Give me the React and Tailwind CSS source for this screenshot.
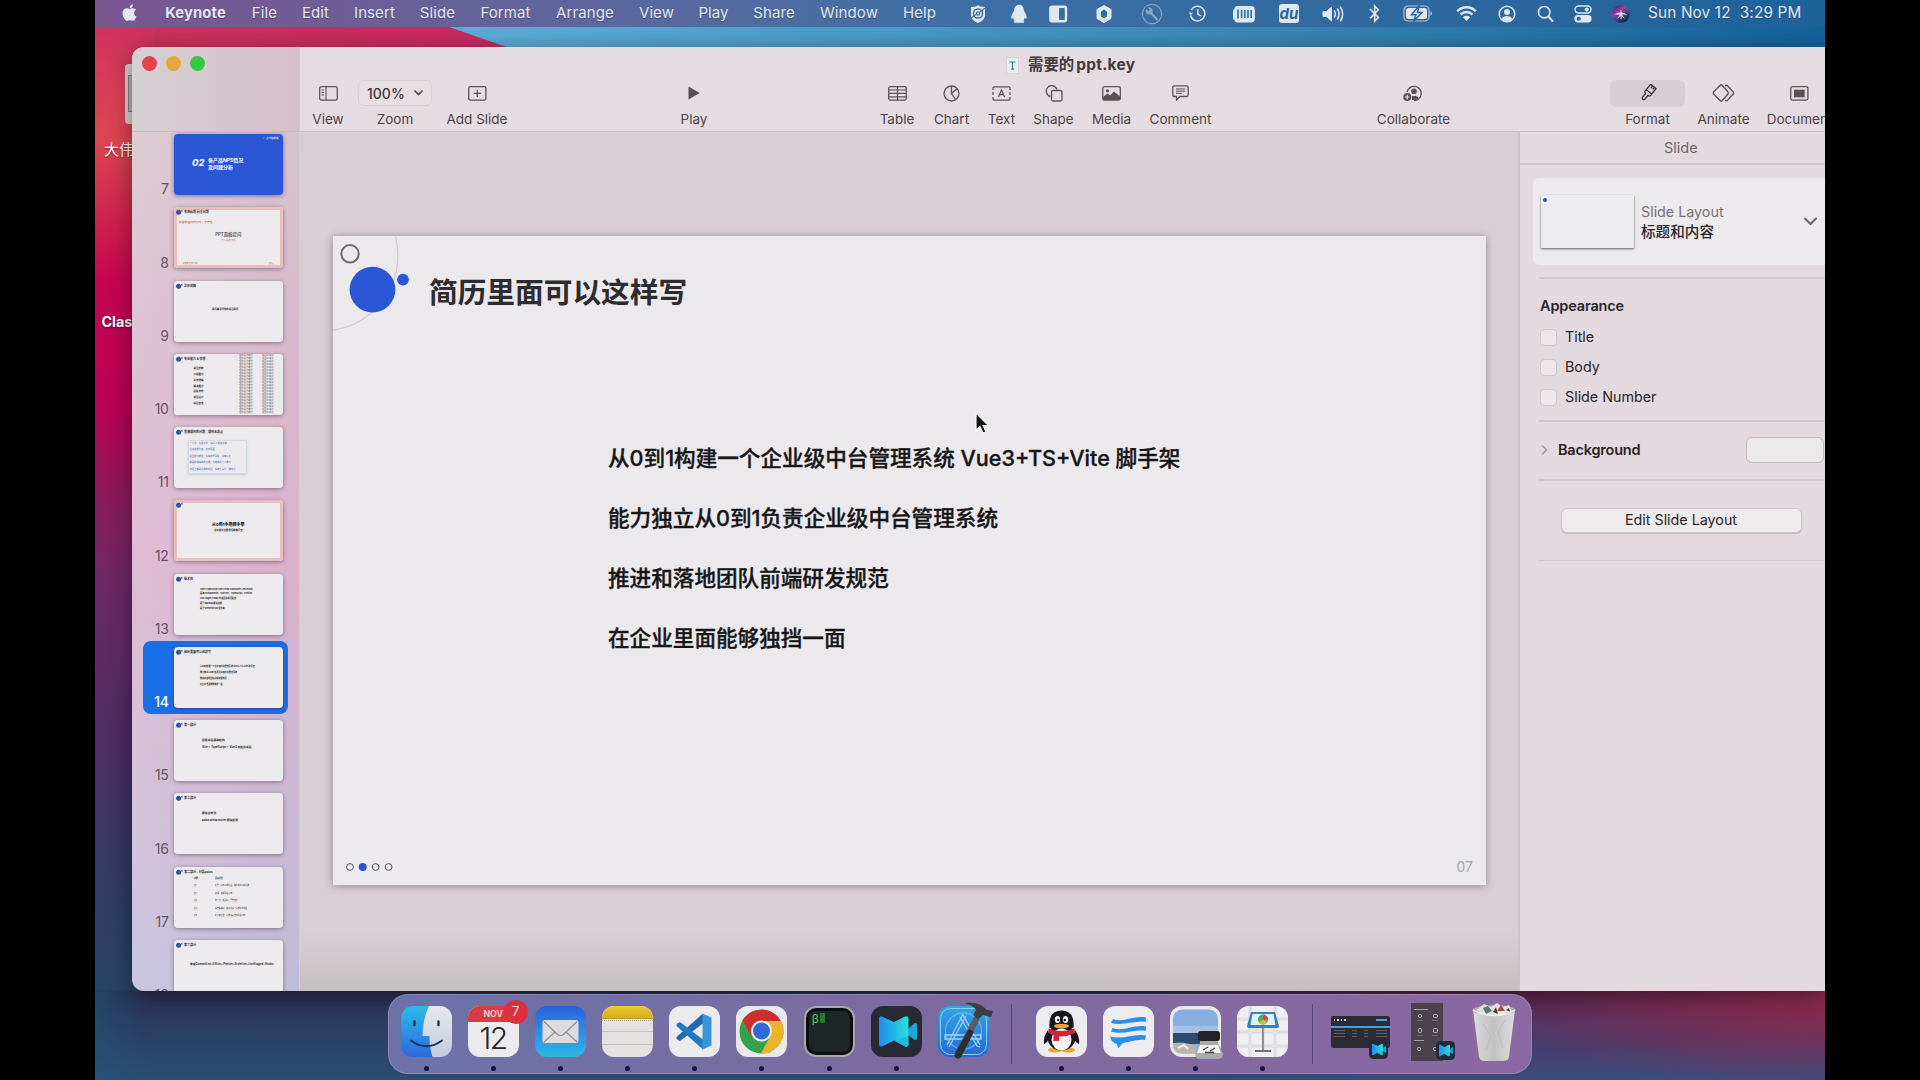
import React from "react";
import { FaApple, FaBluetoothB } from "react-icons/fa";

const UI = "font-['Inter','Noto_Sans_CJK_SC',sans-serif]";

/* ---------- wallpaper ---------- */
function Wallpaper() {
  return (
    <svg className="absolute inset-0 h-full w-full" viewBox="0 0 1730 1080" preserveAspectRatio="none">
      <defs>
        <linearGradient id="wl" x1="0" y1="0" x2="0" y2="1">
          <stop offset="0" stopColor="#cb2c62" />
          <stop offset="0.07" stopColor="#d63c58" />
          <stop offset="0.13" stopColor="#dc4650" />
          <stop offset="0.19" stopColor="#d0294e" />
          <stop offset="0.26" stopColor="#c60550" />
          <stop offset="0.38" stopColor="#b80254" />
          <stop offset="0.46" stopColor="#8a1a5c" />
          <stop offset="0.54" stopColor="#6c2864" />
          <stop offset="0.68" stopColor="#4e2c62" />
          <stop offset="0.8" stopColor="#343a62" />
          <stop offset="0.92" stopColor="#254465" />
          <stop offset="1" stopColor="#28527a" />
        </linearGradient>
        <linearGradient id="wt" x1="0" y1="0" x2="1" y2="0">
          <stop offset="0" stopColor="#c8305f" />
          <stop offset="1" stopColor="#c91a68" />
        </linearGradient>
        <linearGradient id="wb" x1="0" y1="0" x2="1" y2="0">
          <stop offset="0" stopColor="#5eaedb" />
          <stop offset="0.25" stopColor="#4f9fce" />
          <stop offset="0.6" stopColor="#3b87b6" />
          <stop offset="1" stopColor="#14629a" />
        </linearGradient>
        <linearGradient id="wbot" x1="0" y1="0" x2="0" y2="1">
          <stop offset="0" stopColor="#2d3054" />
          <stop offset="0.5" stopColor="#2a4064" />
          <stop offset="1" stopColor="#2a4e74" />
        </linearGradient>
        <linearGradient id="wbm" x1="0" y1="0" x2="1" y2="0">
          <stop offset="0" stopColor="#fff" stopOpacity="0" />
          <stop offset="0.03" stopColor="#fff" />
        </linearGradient>
        <linearGradient id="wbr" x1="0" y1="0" x2="0" y2="1">
          <stop offset="0" stopColor="#5a2048" />
          <stop offset="0.4" stopColor="#513463" />
          <stop offset="1" stopColor="#3a4c7c" />
        </linearGradient>
        <radialGradient id="wrr" cx="1" cy="0.1" r="1">
          <stop offset="0" stopColor="#8e2a4c" />
          <stop offset="1" stopColor="#8e2a4c" stopOpacity="0" />
        </radialGradient>
        <linearGradient id="fade" x1="0" y1="0" x2="1" y2="0">
          <stop offset="0" stopColor="#fff" stopOpacity="0" />
          <stop offset="0.400" stopColor="#fff" />
        </linearGradient>
        <mask id="m">
          <rect x="1000" y="980" width="730" height="100" fill="url(#fade)" />
        </mask>
        <mask id="m2">
          <rect x="0" y="980" width="1730" height="100" fill="url(#wbm)" />
        </mask>
      </defs>
      <rect width="1730" height="1080" fill="url(#wl)" />
      <rect x="0" y="990" width="1730" height="90" fill="url(#wbot)" mask="url(#m2)" />
      <rect x="1000" y="985" width="730" height="95" fill="url(#wbr)" mask="url(#m)" />
      <rect x="1400" y="985" width="330" height="95" fill="url(#wrr)" />
      <rect x="60" y="27" width="500" height="24" fill="url(#wt)" opacity="0.6" />
      <path d="M340 22 L420 50 H1730 V22 Z" fill="url(#wb)" />
    </svg>
  );
}

/* ---------- menu bar ---------- */
const menus = [
  ["File", "w-[25px]"],
  ["Edit", "w-[27px]"],
  ["Insert", "w-[41px]"],
  ["Slide", "w-[35px]"],
  ["Format", "w-[51px]"],
  ["Arrange", "w-[58px]"],
  ["View", "w-[35px]"],
  ["Play", "w-[29px]"],
  ["Share", "w-[42px]"],
  ["Window", "w-[58px]"],
  ["Help", "w-[33px]"],
];

function Cell({ className, children }) {
  return (
    <div className={"flex w-5 shrink-0 items-center justify-center overflow-visible " + className}>
      {children}
    </div>
  );
}

function S({ w = 20, h = 20, vb, children, ...p }) {
  return (
    <svg width={w} height={h} viewBox={vb || `0 0 ${w} ${h}`} fill="none" className="shrink-0" {...p}>
      {children}
    </svg>
  );
}

function MenuBar() {
  const c = "#dfe8f1";
  return (
    <div className="relative flex h-[27px] shrink-0 items-center bg-linear-to-r from-[#7a5590] via-[#4070a6] via-48% to-[#1d6299] text-[15px] tracking-[0.1px] text-[#e3e6f0] [text-shadow:0_1px_1px_rgba(0,0,0,0.25)]">
      <FaApple className="ml-[24.5px] size-[19px] -translate-y-px shrink-0" />
      <div className="ml-[25.5px] flex gap-[25px] whitespace-nowrap">
        <div className="flex w-[63px] justify-center text-[14.8px] font-bold">Keynote</div>
        {menus.map(([t, w]) => (
          <div key={t} className={"flex justify-center " + w}>{t}</div>
        ))}
      </div>
      <Cell className="ml-[32px]">
        <S vb="0 0 20 20">
          <path d="M10 1 L12 2.5 L17 3 V11 C17 15 13.5 17.5 10 19 C6.500 17.500 3 15 3 11 V3 L8 2.500 Z" fill={c} />
          <circle cx="10" cy="9.500" r="4.600" stroke="#3b6f9f" strokeWidth="1.500" />
          <circle cx="10" cy="9.500" r="1.600" stroke="#3b6f9f" strokeWidth="1.200" />
          <path d="M3 14 L8 10.500 M12 8 L17 4" stroke="#3b6f9f" strokeWidth="1.100" />
        </S>
      </Cell>
      <Cell className="ml-[21px]">
        <S>
          <path d="M10 0.800 C13.300 0.800 15 3.500 15 7 C16.800 9.500 17.900 12 17.600 14.200 C17.300 15.300 16.400 14.400 15.800 13.700 C15.600 15 15 16 14.400 16.700 C15.400 17.300 15.600 18.800 14.400 18.800 H5.600 C4.400 18.800 4.600 17.300 5.600 16.700 C5 16 4.400 15 4.200 13.700 C3.600 14.400 2.700 15.300 2.400 14.200 C2.100 12 3.200 9.500 5 7 C5 3.500 6.700 0.800 10 0.800 Z" fill={c} />
        </S>
      </Cell>
      <Cell className="ml-[19px]">
        <S>
          <rect x="1.200" y="1.500" width="18" height="17" rx="3" fill={c} />
          <rect x="11" y="4" width="5.800" height="12" rx="0.800" fill="#336f9f" />
        </S>
      </Cell>
      <Cell className="ml-[26px]">
        <S>
          <path d="M10 1.500 L17 5.500 V14.500 L10 18.500 L3 14.500 V5.500 Z" fill={c} stroke={c} strokeLinejoin="round" />
          <path d="M10 5.500 L13 7.500 V12.500 L10 14.500 L7 12.500 V7.500 Z" fill="#336f9f" />
        </S>
      </Cell>
      <Cell className="ml-[28px]">
        <S w={22} h={22} opacity="0.45">
          <circle cx="11" cy="11" r="9.700" stroke={c} strokeWidth="1.200" />
          <path d="M10 10 L16 16.500" stroke={c} strokeWidth="2.200" strokeLinecap="round" />
          <circle cx="8.300" cy="8" r="3.500" fill={c} />
          <path d="M5 4 L8 7.500" stroke="#336f9f" strokeWidth="2" />
        </S>
      </Cell>
      <Cell className="ml-[25px]">
        <S w={19} h={19}>
          <path d="M3.200 6 A7.300 7.300 0 1 1 2.500 11.500" stroke={c} strokeWidth="1.500" />
          <path d="M0.500 8.500 L2.600 11.200 L5 8.700 Z" fill={c} />
          <path d="M9.800 5.200 V10 L13 12" stroke={c} strokeWidth="1.400" />
        </S>
      </Cell>
      <Cell className="ml-[27px]">
        <S w={22} h={18}>
          <rect x="0" y="4" width="22" height="11" rx="2" fill={c} />
          <rect x="1.500" y="1" width="20" height="16.500" rx="3" fill={c} />
          <path d="M5 4.500 V13.500 M8.600 5 V13 M11.800 5 V13 M15 5 V13 M18.200 5 V13" stroke="#2c6ca0" strokeWidth="1.600" />
        </S>
      </Cell>
      <Cell className="ml-[25px]">
        <div className="flex h-[19px] w-5 shrink-0 items-center justify-center rounded-[3px] bg-[#dfe8f1] text-[15px] leading-none font-bold text-[#2a669a] italic [text-shadow:none]">
          du
        </div>
      </Cell>
      <Cell className="ml-6">
        <S w={23} h={18}>
          <path d="M1 6.500 H4.500 L9.500 2 V16 L4.500 11.500 H1 Z" fill={c} stroke={c} strokeLinejoin="round" />
          <path d="M12.500 6 Q14.300 9 12.500 12 M15.500 4 Q18.500 9 15.500 14 M18.500 2 Q22.800 9 18.500 16" stroke={c} strokeWidth="1.500" strokeLinecap="round" />
        </S>
      </Cell>
      <Cell className="ml-[21px]"><FaBluetoothB className="size-[19px] shrink-0" /></Cell>
      <Cell className="ml-6">
        <S w={30} h={17}>
          <rect x="1" y="1" width="25" height="15" rx="4" stroke={c} strokeWidth="1.200" opacity="0.7" />
          <rect x="3" y="3" width="21" height="11" rx="2.500" fill={c} />
          <path d="M27.600 6 Q30 8.500 27.600 11 Z" fill={c} />
          <path d="M16.500 0.500 L8.500 9.700 H13 L10.500 16.500 L19 7.400 H14.400 Z" fill={c} stroke="#2868a0" strokeWidth="1.500" />
        </S>
      </Cell>
      <Cell className="ml-7">
        <S w={21} h={17}>
          <path d="M1.200 6.300 C6.500 0.900 14.500 0.900 19.800 6.300 M4.500 9.600 C8 6.100 13 6.100 16.500 9.600" stroke={c} strokeWidth="2.300" />
          <path d="M7 12.200 C9 10.300 12 10.300 14 12.200 L10.500 16 Z" fill={c} />
        </S>
      </Cell>
      <Cell className="ml-[20.5px]">
        <S w={18} h={18}>
          <circle cx="9" cy="9" r="7.800" stroke={c} strokeWidth="1.500" />
          <circle cx="9" cy="7" r="3" fill={c} />
          <path d="M3.800 14 C4.500 10 13.500 10 14.200 14 C11.500 17 6.500 17 3.800 14 Z" fill={c} />
        </S>
      </Cell>
      <Cell className="ml-[18.5px]">
        <S w={17} h={18}>
          <circle cx="7.200" cy="7.200" r="5.700" stroke={c} strokeWidth="1.600" />
          <path d="M11.300 11.500 L15.500 16" stroke={c} strokeWidth="1.900" strokeLinecap="round" />
        </S>
      </Cell>
      <Cell className="ml-[18px]">
        <S w={18} h={18}>
          <rect x="1" y="1" width="16" height="7" rx="3.500" stroke={c} strokeWidth="1.400" />
          <circle cx="12.800" cy="4.500" r="2" fill={c} />
          <rect x="0.400" y="10" width="17.200" height="7.500" rx="3.700" fill={c} />
          <circle cx="4.700" cy="13.750" r="2.100" fill="#2666a0" />
        </S>
      </Cell>
      <Cell className="ml-[18px]">
        <S w={18} h={18}>
          <defs>
            <linearGradient id="siri" x1="0" y1="0" x2="0.700" y2="1"><stop offset="0" stopColor="#2a1e4c" /><stop offset="0.400" stopColor="#a03c9c" /><stop offset="0.650" stopColor="#3f4a86" /><stop offset="1" stopColor="#16203c" /></linearGradient>
          </defs>
          <circle cx="9" cy="9" r="8.800" fill="url(#siri)" />
          <path d="M2.500 9.500 Q9 5.500 15.500 10 Q11 9 9.800 9.500 L13 14 L9 10.500 L5 14 L8 9.500 Z" fill="#e8eefa" />
          <path d="M9 5 V14" stroke="#c7d9f2" strokeWidth="1" />
        </S>
      </Cell>
      <div className="ml-[17px] text-[15.3px] tracking-[0.17px] whitespace-pre">Sun Nov 12  3:29 PM</div>
    </div>
  );
}

/* ---------- toolbar ---------- */
function Tool({ label, className, children }) {
  return (
    <div className={"flex shrink-0 flex-col items-center " + className}>
      <div className="flex h-7 w-full items-center justify-center text-[#5c5055]">{children}</div>
      <div className="text-[13.5px] leading-6 whitespace-nowrap text-[#4b4347]">{label}</div>
    </div>
  );
}

function Toolbar() {
  const k = { stroke: "currentColor", strokeWidth: 1.3 };
  return (
    <div className="flex h-[85px] shrink-0 flex-col border-b-[1.5px] border-[#c9c0c5] bg-[#e4dce0] pt-[3px]">
      <div className="flex h-8 items-center pl-[706px]">
        <S w={13} h={17}>
          <rect x="0.500" y="0.500" width="12" height="16" fill="#e9ecf1" stroke="#d0d3da" />
          <path d="M3.500 5 H9.500 M6.500 5 V12 M5 12.200 H8" stroke="#4178a8" strokeWidth="1.200" />
        </S>
        <div className="ml-[9px] text-[15.4px] font-bold text-[#403a3e]">
          需要的<span className="ml-[2px] tracking-[0.3px]">ppt.key</span>
        </div>
      </div>
      <div className="-mt-[2.5px] flex items-start pt-[1.5px]">
        <Tool label="View" className="w-14">
          <S w={19} h={15}>
            <rect x="0.700" y="0.700" width="17.600" height="13.400" rx="1.700" {...k} />
            <path d="M7 1 V14 M2.600 4 H5 M2.600 6.500 H5 M2.600 9 H5" stroke="currentColor" strokeWidth="1.100" />
          </S>
        </Tool>
        <Tool label="Zoom" className="ml-[2px] w-[74px]">
          <div className="flex h-[26px] w-full items-center justify-center gap-[9px] rounded-md border border-[#d8cfd4] bg-[#e6dfe2] text-[14px] font-medium text-[#3f373b]">
            <span className="w-[38px]">100%</span>
            <S w={9} h={6}><path d="M1 1 L4.500 4.500 L8 1" stroke="#51484c" strokeWidth="1.700" strokeLinecap="round" /></S>
          </div>
        </Tool>
        <Tool label="Add Slide" className="ml-[13px] w-16">
          <S w={19} h={15}>
            <rect x="0.700" y="0.700" width="17.200" height="13.400" rx="1.500" {...k} />
            <path d="M9.300 3.800 V11 M5.700 7.400 H12.900" {...k} />
          </S>
        </Tool>
        <Tool label="Play" className="ml-[165px] w-10">
          <S w={12} h={14}><path d="M0.500 0.500 L11.700 7 L0.500 13.500 Z" fill="#5b4f54" /></S>
        </Tool>
        <Tool label="Table" className="ml-[161px] w-11">
          <S w={19} h={15}>
            <rect x="0.700" y="0.700" width="17.600" height="13.400" rx="1.500" {...k} />
            <path d="M1 4 H18 M1 7.400 H18 M1 10.800 H18 M9.500 1 V14" stroke="currentColor" strokeWidth="1.200" />
          </S>
        </Tool>
        <Tool label="Chart" className="ml-[10.5px] w-11">
          <S w={17} h={17}>
            <circle cx="8.500" cy="8.500" r="7.500" {...k} />
            <path d="M8.500 1 V8.500 L14 3.800 M8.500 8.500 L12.500 14.500" {...k} />
          </S>
        </Tool>
        <Tool label="Text" className="ml-2 w-10">
          <S w={19} h={15}>
            <path d="M1 4 V2.200 Q1 0.900 2.300 0.900 H16.700 Q18 0.900 18 2.200 V4 M18 6 V9 M1 6 V9 M1 11 V12.800 Q1 14.100 2.300 14.100 H16.700 Q18 14.100 18 12.800 V11" {...k} />
            <path d="M6.500 11 L9.500 4 L12.500 11 M7.600 8.700 H11.400" stroke="currentColor" strokeWidth="1.200" />
          </S>
        </Tool>
        <Tool label="Shape" className="ml-2.5 w-11">
          <S w={18} h={17}>
            <path d="M5.500 11.500 A5.500 5.500 0 1 1 12 4.500" {...k} />
            <rect x="6.500" y="5.500" width="10.500" height="10.500" rx="1.500" {...k} />
          </S>
        </Tool>
        <Tool label="Media" className="ml-3.5 w-11">
          <S w={19} h={15}>
            <rect x="0.700" y="0.700" width="17.600" height="13.400" rx="1.500" {...k} />
            <path d="M1 11 L5.500 7.500 L8 9.500 L12 5.500 L18 10.500 V14 H1 Z" fill="currentColor" />
            <circle cx="5.500" cy="4.800" r="1.600" fill="currentColor" />
          </S>
        </Tool>
        <Tool label="Comment" className="ml-[15px] w-16">
          <S w={17} h={16} vb="0 0 17 16">
            <path d="M2.500 0.800 H14.500 Q16.200 0.800 16.200 2.500 V9.800 Q16.200 11.500 14.500 11.500 H8 L4.500 15 V11.500 H2.500 Q0.800 11.500 0.800 9.800 V2.500 Q0.800 0.800 2.500 0.800 Z" stroke="currentColor" strokeWidth="1.300" />
            <path d="M4 4 H13 M4 6.200 H13 M4 8.400 H10" stroke="currentColor" strokeWidth="1" />
          </S>
        </Tool>
        <Tool label="Collaborate" className="ml-[161px] w-20">
          <S w={19} h={17} transform="translate(-1 0)">
            <path d="M4 7 A7.200 7.200 0 1 1 11 15.700" {...k} />
            <circle cx="11" cy="6.200" r="2.800" fill="currentColor" />
            <path d="M9 15 V11 H13 Q15.500 11.500 15.500 13.500 L13 15 Z" fill="currentColor" />
            <circle cx="4.300" cy="12" r="4" fill="currentColor" />
            <path d="M4.300 9.800 V14.200 M2.100 12 H6.500" stroke="#e4dce0" strokeWidth="1.200" />
          </S>
        </Tool>
        <Tool label="Format" className="ml-[156.5px] w-[75px]">
          <div className="flex h-[27px] w-full items-center justify-center rounded-md bg-[#d6ced2]">
            <S w={18} h={18}>
              <g transform="rotate(40 9 9)">
                <path d="M5.500 0.500 H12.500 V7.500 H5.500 Z M5.500 7.500 V9.500 Q5.500 10.500 7.500 11 V16 Q9 18.500 10.500 16 V11 Q12.500 10.500 12.500 9.500 V7.500 M8 0.500 V3.500 M10.300 0.500 V3" stroke="#2e2629" strokeWidth="1.200" strokeLinejoin="round" />
              </g>
            </S>
          </div>
        </Tool>
        <Tool label="Animate" className="ml-[10.5px] w-14">
          <S w={23} h={18}>
            <path d="M8.500 1 Q9.200 0.500 9.900 1 L16 8 Q16.600 9 16 10 L9.900 17 Q9.200 17.500 8.500 17 L1.500 10 Q0.800 9 1.500 8 Z" stroke="currentColor" strokeWidth="1.300" />
            <path d="M13 1.500 L15 1.200 L21.500 8.200 Q22 9 21.500 9.800 L15 16.800 L13 16.500" stroke="currentColor" strokeWidth="1.300" />
          </S>
        </Tool>
        <Tool label="Document" className="ml-[15px] w-[66px]">
          <S w={19} h={15}>
            <rect x="0.700" y="0.700" width="17.200" height="13.400" rx="1.500" {...k} />
            <rect x="4" y="3.700" width="10.700" height="7.600" fill="currentColor" />
          </S>
        </Tool>
      </div>
    </div>
  );
}

/* ---------- slide navigator ---------- */
function Mark() {
  return (
    <S w={7} h={6}>
      <circle cx="2.600" cy="3.200" r="2.500" fill="#3153a8" />
      <circle cx="5.900" cy="1.900" r="0.800" fill="#3153a8" />
    </S>
  );
}

function Mini({ title, framed, children, lines, body = "" }) {
  return (
    <div className={"flex h-full w-full flex-col bg-[#eceaec] text-[2.8px] leading-[3.4px] text-[#222] " + (framed ? "border-[3px] border-[#e7bebd] " : "")}>
      <div className={"flex items-center gap-[1.5px] text-[3px] leading-[6px] font-bold whitespace-nowrap " + (framed ? "-mt-[1.500px] -ml-[1.500px]" : "mt-[2px] ml-[1.500px]")}>
        <Mark />
        <span>{title}</span>
      </div>
      {lines && (
        <div className={"flex flex-col font-bold whitespace-nowrap " + body}>
          {lines.map((l) => <div key={l}>{l}</div>)}
        </div>
      )}
      {children}
    </div>
  );
}

const slideLines = [
  "从0到1构建一个企业级中台管理系统 Vue3+TS+Vite 脚手架",
  "能力独立从0到1负责企业级中台管理系统",
  "推进和落地团队前端研发规范",
  "在企业里面能够独挡一面",
];

const dense = Array.from({ length: 20 }, (_, i) => i);

const thumbs = [
  [7, (
    <div className="flex h-full w-full flex-col bg-[#2b56d6] text-white">
      <div className="mt-[3px] mr-1 self-end text-[2.500px] leading-[4px]">◎ 大伟聊前端</div>
      <div className="mt-[16px] ml-[18px] flex gap-[3.500px]">
        <span className="text-[9.500px] leading-[11px] font-bold italic">02</span>
        <span className="text-[5px] leading-[6.500px] font-bold">各产品NPS情况<br />及问题分析</span>
      </div>
    </div>
  )],
  [8, (
    <Mini title="专场标题 前言问题" framed>
      <div className="mt-[6px] ml-0.5 text-[#d04a3c]">前言前言如何打动：才开始</div>
      <div className="mt-[8px] text-center text-[4.400px] leading-[5px] font-medium text-[#444]">PPT面临提问</div>
      <div className="mt-0.5 text-center text-[2.400px] text-[#d04a3c]">个人亮点介绍</div>
      <div className="mt-auto flex justify-between px-1.5 text-[1.800px] text-[#d04a3c]"><span>前言前言如何打动</span><span>第8页</span></div>
    </Mini>
  )],
  [9, <Mini title="总体讲解" lines={["简历编写好你的项目简历"]} body="mt-[19px] pl-[38px] text-[2.400px]" />],
  [10, (
    <div className="flex h-full w-full bg-[#eceaec]">
      <div className="w-[65px]">
        <Mini title="专业能力 & 荣誉" lines={["项目架构", "工程能力", "业务理解", "解决能力", "团队协作", "项目设计", "项目复盘"]} body="mt-[5.500px] ml-[19.500px] gap-[2.400px] text-[2.500px]" />
      </div>
      {[0, 1].map((c) => (
        <div key={c} className={"text-[2.300px] leading-[3px] whitespace-nowrap text-[#555] " + (c ? "ml-[9px] w-[12px]" : "w-[14px]")}>
          {dense.map((i) => <div key={i}>{c ? "项目工程化" : "组件设计能力"}</div>)}
        </div>
      ))}
    </div>
  )],
  [11, (
    <Mini title="普通项目的问题：项目无亮点">
      <div className="mt-[5px] ml-[13.500px] flex h-[34px] w-[59px] flex-col gap-[3px] rounded-[1px] border-[0.5px] border-[#d4dae2] pt-px pl-px text-[2.300px] whitespace-nowrap text-[#3d6db5] shadow-sm">
        <div>一个月：负责系统，编写 X 模块功能</div>
        <div>业务增删改查，完成页面</div>
        <div>项目的功能性，没有技术深度，没有亮点</div>
        <div>都是前端基础的功能，不能体现个人能力</div>
        <div>简历上都是这样的项目，没有竞争力，概率大</div>
      </div>
    </Mini>
  )],
  [12, (
    <Mini title="" framed>
      <div className="mt-[14px] text-center text-[4px] leading-[5px] font-bold text-black">从0到1手撸脚手架</div>
      <div className="mt-[2.500px] text-center text-[2.400px] font-bold">企业级中台管理系统脚手架</div>
    </Mini>
  )],
  [13, <Mini title="技术栈" lines={["Vue3  TypeScript  Vue3 Pinia VueRouter Less Eslint", "基础 Components、VueUse、TypeScript、Prettier、", "CSS Pages Husky 约束团队规范提交", "基于 Markup 模块搭建", "基于 ElementPlus 组件库"]} body="mt-[6px] ml-[26px] gap-[1.500px] text-[2.150px]" />],
  [14, <Mini title="简历里面可以这样写" lines={slideLines} body="mt-[10.500px] ml-[26px] gap-[2.400px] text-[2.050px]" />],
  [15, <Mini title="第一部分" lines={["配置项目基础结构", "Vite + TypeScript + Vue3 初始化项目"]} body="mt-[11px] ml-7 gap-[3.200px] text-[2.850px]" />],
  [16, <Mini title="第二部分" lines={["模块化封装", "axios pinia router 模块配置"]} body="mt-[11px] ml-7 gap-[3.200px] text-[2.850px]" />],
  [17, (
    <Mini title="第二部分 - 封装axios">
      <div className="mt-[2px] ml-5 flex w-[63px] flex-col gap-[4.200px] text-[1.900px] whitespace-nowrap">
        {["目标问题", "封装：添加请求拦截，携带令牌公共参数", "取消：取消重复请求", "统一化：错误码，异常信息", "基于类实现：实例化多个请求对象适配", "提升健壮性：请求失败自动重试机制"].map((t, i) => (
          <div key={t} className={"flex " + (i ? "" : "font-bold")}><span className="w-[21px]">{i ? "第" + i : "功能"}</span><span>{t}</span></div>
        ))}
      </div>
    </Mini>
  )],
  [18, <Mini title="第三部分" lines={["集成CommitLint+ESLint+Prettier+StyleLint+LintStaged+Husky"]} body="mt-[15.500px] ml-4 text-[2.750px]" />],
];

function Navigator() {
  return (
    <div className="flex w-[168px] shrink-0 flex-col border-r border-[#d5cbd2] bg-linear-to-b from-[#d5c6ca] via-[#dab0cd] via-55% to-[#bfbdd8]">
      <div className="flex h-[85px] shrink-0 items-start gap-[9px] border-b-[1.5px] border-[#c9b9c2] bg-linear-to-r from-[#d5d0d3] to-[#d7bfca] pt-[9px] pl-[9.500px]">
        <div className="size-[15px] rounded-full bg-[#e04453]" />
        <div className="size-[15px] rounded-full bg-[#e5a939]" />
        <div className="size-[15px] rounded-full bg-[#34c840]" />
      </div>
      <div className="min-h-0 flex-1 overflow-hidden bg-linear-to-r from-white/15 to-transparent">
        <div className="-mt-[4px] flex flex-col pr-[11px] pl-[11px]">
          {thumbs.map(([n, body]) => {
            const on = n === 14;
            return (
              <div key={n} className={"flex h-[73.25px] shrink-0 rounded-lg pt-[6px] pl-px " + (on ? "bg-[#1a6fe8]" : "")}>
                <div className={"w-[24.500px] self-end pb-[2px] text-right text-[14px] tracking-tight " + (on ? "font-medium text-white" : "text-[#66535f]")}>{n}</div>
                <div className="ml-[5.500px] h-[61px] w-[108.500px] overflow-hidden rounded-[4px] shadow-[0_1px_4px_rgba(60,30,60,0.5)]">{body}</div>
              </div>
            );
          })}
        </div>
      </div>
    </div>
  );
}

/* ---------- slide canvas ---------- */
function Slide() {
  return (
    <div className="relative flex h-[649px] w-[1153px] flex-col bg-[#ebe9eb] shadow-[0_1px_8px_rgba(60,50,55,0.45)]">
      <svg className="absolute top-0 left-0" width="90" height="100" viewBox="0 0 90 100" fill="none">
        <circle cx="-10.400" cy="19.500" r="75.200" stroke="#cbc9cb" strokeWidth="1.200" />
        <circle cx="17" cy="17.800" r="8.700" stroke="#6c6a6c" strokeWidth="2" fill="#ebe9eb" />
        <circle cx="39.500" cy="53.600" r="22.900" fill="#2b56d6" />
        <circle cx="70" cy="43.600" r="5.900" fill="#2b56d6" />
      </svg>
      <div className="mt-[37px] ml-[96px] text-[28.700px] leading-10 font-bold text-[#2d2c2e]">简历里面可以这样写</div>
      <div className="mt-[114.500px] ml-[275px] flex flex-col text-[21.600px] leading-[60.200px] font-medium whitespace-nowrap text-[#161517] [-webkit-text-stroke:0.35px_#161517]">
        {slideLines.map((l) => <div key={l}>{l}</div>)}
      </div>
      <div className="mt-auto mb-[9px] flex items-center justify-between pr-[13px] pl-[13px]">
        <svg width="48" height="10" viewBox="0 0 48 10" fill="none">
          <circle cx="4" cy="5" r="3.400" stroke="#555" />
          <circle cx="16.700" cy="5" r="4" fill="#2b56d6" />
          <circle cx="29.600" cy="5" r="3.400" stroke="#555" />
          <circle cx="42.600" cy="5" r="3.400" stroke="#555" />
        </svg>
        <span className="text-[14px] leading-[18px] text-[#a9a6a9]">07</span>
      </div>
      <svg className="absolute top-[175px] left-[641px]" width="18" height="26" viewBox="0 0 18 26">
        <path d="M2 2 V19 L6 15.500 L9 22 L12 20.700 L9.200 14.500 H14.500 Z" fill="#111" stroke="#f6f6f6" strokeWidth="1.200" />
      </svg>
    </div>
  );
}

/* ---------- inspector ---------- */
function Rule() {
  return <div className="ml-[18.500px] h-[1.500px] shrink-0 bg-[#cfc5ca]" />;
}

function Inspector() {
  return (
    <div className="flex w-[307px] shrink-0 flex-col border-l-2 border-[#cbc2c7] bg-[#e2dade] text-[14.500px] text-[#2a2528]">
      <div className="flex h-[33px] shrink-0 items-center border-b-2 border-[#cfc6cb] pt-px pl-[144px] text-[#706669]">Slide</div>
      <div className="mt-[13px] ml-[13px] flex h-[87px] shrink-0 items-center rounded-l-md bg-[#eceaec] pl-[7.500px]">
        <div className="-mt-px h-[53px] w-[93px] bg-[#ecebed] pt-[3px] pl-[2px] shadow-[0_1px_2px_rgba(0,0,0,0.6)]">
          <div className="size-[4px] rounded-full bg-[#3153b8]" />
        </div>
        <div className="ml-[7.500px] flex flex-col leading-[21px]">
          <span className="text-[14.300px] text-[#777175]">Slide Layout</span>
          <span className="text-[14.600px] font-medium">标题和内容</span>
        </div>
        <div className="mr-[8.500px] ml-auto">
          <S w={13} h={9}><path d="M1 1.500 L6.500 7 L12 1.500" stroke="#6a6367" strokeWidth="2" strokeLinecap="round" /></S>
        </div>
      </div>
      <div className="mt-[12px]"><Rule /></div>
      <div className="mt-[15px] ml-5 leading-6 font-semibold tracking-[-0.150px]">Appearance</div>
      <div className="mt-[4.500px] ml-5 flex flex-col text-[14.300px]">
        {["Title", "Body", "Slide Number"].map((t) => (
          <div key={t} className="flex h-[30px] items-center">
            <div className="size-[17px] rounded-[4px] border border-[#cfc7cb] bg-[#ece8ea]" />
            <span className="ml-2">{t}</span>
          </div>
        ))}
      </div>
      <div className="mt-[8px]"><Rule /></div>
      <div className="flex h-[57.500px] shrink-0 items-center pl-[21px]">
        <S w={7} h={10}><path d="M1.500 1 L5.500 5 L1.500 9" stroke="#a0979b" strokeWidth="1.500" strokeLinecap="round" /></S>
        <span className="ml-[10px] font-semibold tracking-[-0.200px]">Background</span>
        <div className="mr-px ml-auto h-[26px] w-[78px] rounded-md border border-[#bfb7bb] bg-[#ece9eb]" />
      </div>
      <Rule />
      <div className="mt-[27px] ml-[40.500px] flex h-[25px] w-[241px] shrink-0 items-center justify-center rounded-md border border-[#ccc4c8] bg-[#eeebed] text-[14.300px] shadow-[0_1px_1px_rgba(0,0,0,0.15)]">Edit Slide Layout</div>
      <div className="mt-[27px]"><Rule /></div>
    </div>
  );
}

function KeynoteWindow() {
  return (
    <div className="relative mt-5 ml-[37px] flex h-[944px] shrink-0 overflow-hidden rounded-l-[12px] shadow-[0_4px_22px_rgba(0,0,0,0.45)]">
      <Navigator />
      <div className="flex min-w-0 flex-1 flex-col">
        <Toolbar />
        <div className="flex min-h-0 flex-1">
          <div className="min-w-0 flex-1 bg-linear-to-b from-[#d8cfd4] from-93% to-[#c6bfc1] pt-[104px] pl-[33px]"><Slide /></div>
          <Inspector />
        </div>
      </div>
    </div>
  );
}

/* ---------- dock ---------- */
function DockApp({ dot = true, className = "", children }) {
  return (
    <div className={"flex w-[51px] shrink-0 flex-col items-center " + className}>
      <div className="relative h-[51px] w-[51px]">{children}</div>
      <div className={"mt-[9.500px] size-[5px] rounded-full " + (dot ? "bg-[#15114c]" : "")} />
    </div>
  );
}

function Camera({ className }) {
  return (
    <svg viewBox="0 0 51 51" className={className}>
      <defs>
        <linearGradient id="cam" x1="0" x2="1"><stop offset="0" stopColor="#1f8cf0" /><stop offset="1" stopColor="#25e2dc" /></linearGradient>
      </defs>
      <rect width="51" height="51" rx="12" fill="#272933" />
      <path d="M36 24 L43 17.500 Q46 16 46 19 V32 Q46 35 43 33.500 L36 28 Z" fill="#1ea6d8" />
      <path d="M8 13 Q8 9 12 11 L23 16 L33 11 Q37.500 9 37.500 13 V38 Q37.500 42 33 40 L23 34.500 L12 40 Q8 42 8 38 Z" fill="url(#cam)" />
      <path d="M37 30 L24 34.800 L33 40 Q37.500 42 37.500 38 Z" fill="#23b9d8" />
    </svg>
  );
}

const box = "h-[51px] w-[51px] overflow-hidden rounded-[12px]";

function Dock() {
  return (
    <div className="relative mt-[3px] ml-[293px] flex h-[80px] w-[1144px] shrink-0 rounded-[20px] border border-[#9d93c0]/70 bg-linear-to-r from-[#6b72a8] via-[#7d6a9f] via-50% to-[#8b68a2] pt-[10.500px] pl-[11.500px]">
      <div className="flex gap-[16.200px]">
        <DockApp>
          <svg viewBox="0 0 51 51" className={box}>
            <defs>
              <linearGradient id="f1" x1="0" y1="0" x2="0" y2="1"><stop offset="0" stopColor="#2cbbe8" /><stop offset="1" stopColor="#2a6ae0" /></linearGradient>
              <linearGradient id="f2" x1="0" y1="0" x2="0" y2="1"><stop offset="0" stopColor="#e8e8ec" /><stop offset="1" stopColor="#c3ccdb" /></linearGradient>
            </defs>
            <rect width="51" height="51" fill="url(#f1)" />
            <path d="M28 0 C24 8 22 18 21.500 30 H28.500 C28.500 38 29.500 45 31.500 51 H51 V0 Z" fill="url(#f2)" />
            <path d="M13.500 15.500 V19 M37.500 15.500 V19" stroke="#17324f" strokeWidth="2.400" strokeLinecap="round" />
            <path d="M10 34.500 Q25.500 46 41 34.500" stroke="#17324f" strokeWidth="1.800" fill="none" strokeLinecap="round" />
          </svg>
        </DockApp>
        <DockApp>
          <div className={"flex flex-col bg-[#eceaec] " + box}>
            <div className="flex h-4 shrink-0 items-center justify-center bg-[#d93a44] pt-px text-[8.800px] font-semibold text-[#f3dcdf]">NOV</div>
            <div className="text-center text-[30px] leading-[33px] font-light tracking-[-1.500px] text-[#222]">12</div>
          </div>
          <div className="absolute -top-[6px] -right-[9px] flex size-[24px] items-center justify-center rounded-full bg-[#dd2f3e] text-[13px] text-[#f4dde0]">7</div>
        </DockApp>
        <DockApp>
          <svg viewBox="0 0 51 51" className={box}>
            <defs><linearGradient id="ml" x1="0" y1="0" x2="0" y2="1"><stop offset="0" stopColor="#2a62dc" /><stop offset="1" stopColor="#2db7e6" /></linearGradient></defs>
            <rect width="51" height="51" fill="url(#ml)" />
            <rect x="7.500" y="14" width="36" height="23" rx="2.500" fill="#dcdcdf" />
            <path d="M9 15.500 L22 28 Q25.500 31 29 28 L42 15.500 M9 36 L20 26 M42 36 L31 26" stroke="#8d8d92" strokeWidth="1.200" fill="none" />
          </svg>
        </DockApp>
        <DockApp>
          <div className={"flex flex-col bg-[#e4e1e0] " + box}>
            <div className="h-[13px] border-b border-[#b99c2c] bg-linear-to-b from-[#edc92f] to-[#d9af1c]" />
            <div className="mt-px border-t border-dotted border-[#aaa]" />
            <div className="mt-[10px] h-px bg-[#c4c0c0]" />
            <div className="mt-3 h-px bg-[#c4c0c0]" />
          </div>
        </DockApp>
        <DockApp>
          <svg viewBox="0 0 51 51" className={box}>
            <rect width="51" height="51" fill="#ebebee" />
            <path d="M34 7.500 L7.500 31 Q7 33 9 34 L11 35 L34.500 17 Z" fill="#1c6bb2" />
            <path d="M34 43.500 L7.500 20 Q7 18 9 17 L11 16 L34.500 34 Z" fill="#2179c4" />
            <path d="M33.500 7.500 L42.500 11.500 V39.500 L33.500 43.500 Z" fill="#3b96d8" />
          </svg>
        </DockApp>
        <DockApp>
          <svg viewBox="0 0 51 51" className={box}>
            <rect width="51" height="51" fill="#e9e8ea" />
            <circle cx="25.500" cy="25.500" r="22" fill="#36a04c" />
            <path d="M25.500 25.500 L25 47.500 A22 22 0 0 0 44.800 15 H25.500 Z" fill="#eab32c" />
            <path d="M25 47.500 L34.500 30.500 L25.500 25.500 L16 31 Z" fill="#36a04c" />
            <path d="M25 47.500 L34.500 30.500 V47 Z" fill="#eab32c" />
            <path d="M6.500 14.500 A22 22 0 0 1 44.700 15 H25.500 L16 31 Z" fill="#cf2f2c" />
            <circle cx="25.500" cy="25" r="10.500" fill="#eeeef0" />
            <circle cx="25.500" cy="25" r="8.500" fill="#3169d8" />
          </svg>
        </DockApp>
        <DockApp>
          <div className={"border-[2px] border-[#a7a9ab] bg-[#0c0e0f] p-[3px] " + box}>
            <div className="flex h-full w-full items-start rounded-[7px] bg-[#1f2627] pt-[2.500px] pl-[3px] text-[12px] leading-[12px] text-[#3fd045]">
              β<span className="ml-px h-[10px] w-[5px] bg-[#1f7c2b]" />
            </div>
          </div>
        </DockApp>
        <DockApp><Camera className="h-[51px] w-[51px]" /></DockApp>
        <DockApp dot={false}>
          <svg viewBox="0 0 60 60" className="absolute -top-[4px] -left-[1px] h-[60px] w-[60px]">
            <defs><linearGradient id="xc" x1="0" y1="0" x2="0" y2="1"><stop offset="0" stopColor="#2fa6e8" /><stop offset="1" stopColor="#2868d4" /></linearGradient></defs>
            <rect x="1" y="4" width="51" height="51" rx="12" fill="url(#xc)" />
            <rect x="3.500" y="6.500" width="46" height="46" rx="10" fill="none" stroke="#8fd0f4" strokeWidth="1" />
            <g stroke="#9cd3f5" strokeWidth="1.300" fill="none">
              <circle cx="26.500" cy="29" r="18" opacity="0.500" />
              <path d="M23 15 L40 44 L43 45 M26 13 L43 43 M29 14 L12 45 M26 12 L10 43 M8 33 H44 V37 H8 Z" />
            </g>
            <path d="M38 13 L43 16 L24 55 Q21 58 18 55 Q17 53 18 51 Z" fill="#5a5b62" />
            <path d="M32 27 L37 30 L24 55 Q21 58 18 55 Q17 53 18 51 Z" fill="#2c2c31" />
            <path d="M29 1 Q42 -1 50 8 L56 9 L54 15 L46 13 L41 17 L36 13 L39 8 Q36 3 29 2 Z" fill="#3d3d42" />
          </svg>
        </DockApp>
      </div>
      <div className="-mt-0.5 ml-[22px] h-[60px] w-px shrink-0 bg-[#54457c]" />
      <div className="ml-[23.500px] flex gap-[16.200px]">
        <DockApp>
          <svg viewBox="0 0 51 51" className={box}>
            <rect width="51" height="51" fill="#ecebed" />
            <ellipse cx="19" cy="44" rx="7" ry="2.500" fill="#e9a726" />
            <ellipse cx="32" cy="44" rx="7" ry="2.500" fill="#e9a726" />
            <path d="M12 24 Q7 31 8 38 Q11 37 14 32 Z M39 24 Q44 31 43 38 Q40 37 37 32 Z" fill="#17171b" />
            <ellipse cx="25.500" cy="31.500" rx="14" ry="13" fill="#17171b" />
            <ellipse cx="25.500" cy="33.500" rx="10" ry="11" fill="#f3f3f5" />
            <path d="M13.500 22 Q12 4.500 25.500 4.500 Q39 4.500 37.500 22 Z" fill="#17171b" />
            <ellipse cx="21.500" cy="13.500" rx="2.600" ry="3.500" fill="#fff" />
            <ellipse cx="29.500" cy="13.500" rx="2.600" ry="3.500" fill="#fff" />
            <circle cx="22.200" cy="14" r="1.200" fill="#111" />
            <circle cx="28.800" cy="14" r="1.200" fill="#111" />
            <ellipse cx="25.500" cy="20" rx="7.500" ry="2.300" fill="#e9a726" />
            <path d="M12.500 22.500 Q25.500 27.500 38.500 22.500 L39 27 Q31 31 23 30.500 V35 H17.500 V29 Q14 28 12.500 27 Z" fill="#d02438" />
          </svg>
        </DockApp>
        <DockApp>
          <svg viewBox="0 0 51 51" className={box}>
            <rect width="51" height="51" fill="#ecebed" />
            <path d="M10 13 C20 17 32 9 43 11.500 L42.500 16 C32 14 20 20.500 8 17 Z M9.500 22 C20 26 32 18 43 20.500 L42.500 25 C32 23 20 29.500 8 25.500 Z M7 30.500 C20 34 32 27 43 29.500 L42 34 C34 32.500 26 36 20 37 L15 42.500 L14 38 Q9 37.500 7 30.500 Z" fill="#2a8eea" />
          </svg>
        </DockApp>
        <DockApp>
          <svg viewBox="0 0 54 54" className="absolute top-0 left-0 h-[54px] w-[54px]">
            <rect width="51" height="51" rx="12" fill="#e8e8ea" />
            <rect x="3" y="3.500" width="45" height="44" rx="9" fill="#88aee0" />
            <path d="M3 20 H48 V28 H3 Z" fill="#b8cbe6" opacity="0.600" />
            <path d="M3 27 H48 V38 H3 Z" fill="#2c4a6e" />
            <path d="M3 37 Q14 35 26 40 V47.500 H12 Q3 47.500 3 38 Z" fill="#b8b4a8" />
            <path d="M8 42 L14 39 L18 43" stroke="#eee" strokeWidth="2" fill="none" />
            <path d="M30 33 H48 V37 L53 48 Q53 53 48 53 H30 Q25 53 25 48 L30 37 Z" fill="#a9aaa9" />
            <path d="M30 39 L27 47 H51 L48 39 Z" fill="#f1f1f1" />
            <rect x="28" y="25" width="22" height="10" rx="3" fill="#222327" />
            <path d="M33 44 L38 41 M40 45 L45 42 M35 46.500 H44" stroke="#444" strokeWidth="1.400" />
          </svg>
        </DockApp>
        <DockApp>
          <svg viewBox="0 0 51 51" className={box}>
            <rect width="51" height="51" fill="#e4e4e7" />
            <g fill="#f0eff1" stroke="#d3d3d7" strokeWidth="0.800">
              <rect x="-2" y="-2" width="14" height="14" rx="2" /><rect x="14" y="-2" width="23" height="14" rx="2" /><rect x="39" y="-2" width="14" height="14" rx="2" />
              <rect x="-2" y="14" width="14" height="11" rx="2" /><rect x="39" y="14" width="14" height="11" rx="2" />
              <rect x="-2" y="27" width="14" height="12" rx="2" /><rect x="14" y="27" width="23" height="12" rx="2" /><rect x="39" y="27" width="14" height="12" rx="2" />
              <rect x="-2" y="41" width="14" height="12" rx="2" /><rect x="14" y="41" width="23" height="12" rx="2" /><rect x="39" y="41" width="14" height="12" rx="2" />
            </g>
            <path d="M14 6 H38 L42 20 Q42 22 40 22 H12 Q10 22 10 20 Z" fill="#2c83c6" />
            <path d="M15.500 8 H36.500 L38.500 19 H13.500 Z" fill="#e5f0f5" />
            <circle cx="26" cy="13.500" r="5" fill="#45b06a" />
            <path d="M26 13.500 V8.500 A5 5 0 0 1 31 14 Z" fill="#e0453a" />
            <path d="M26 13.500 L22 17 A5 5 0 0 0 30 16.500 Z" fill="#e9b435" />
            <path d="M26 22 V44" stroke="#8e9094" strokeWidth="2.200" />
            <path d="M18 45 H34" stroke="#6d6f74" strokeWidth="1.800" />
          </svg>
        </DockApp>
      </div>
      <div className="-mt-0.5 ml-[23.500px] h-[60px] w-px shrink-0 bg-[#54457c]" />
      <div className="relative mt-[10px] ml-[18px] h-[32px] w-[59px] shrink-0 rounded-[2px] bg-[#2b2c35]">
        <div className="flex items-center gap-[2px] px-[3px] pt-[3px]">
          <div className="size-[1.500px] bg-white/80" /><div className="size-[1.500px] bg-white/80" /><div className="size-[1.500px] bg-white/80" /><div className="size-[1.500px] bg-white/80" />
          <div className="ml-auto h-[2.500px] w-[11px] bg-[#4aa0e6]" />
        </div>
        <div className="mt-[5px] h-[2px] bg-[#4c9bdb]" />
        <div className="mt-[2px] flex flex-col gap-[2px] px-[3px] opacity-60">
          {[0, 1, 2].map((i) => (
            <div key={i} className="flex justify-between"><div className="h-px w-[11px] bg-white/40" /><div className="h-px w-[5px] bg-white/40" /><div className="h-px w-[4px] bg-white/40" /><div className="h-px w-[11px] bg-white/40" /></div>
          ))}
        </div>
        <Camera className="absolute top-[24.500px] left-[38px] size-[19px]" />
      </div>
      <div className="relative -mt-[3px] ml-[21.500px] h-[58px] w-[32px] shrink-0 bg-[#4b424b]">
        <div className="mt-[6px] ml-[3px] h-px w-[14px] bg-white/50" />
        <div className="mt-[4px] grid grid-cols-2 justify-items-center gap-y-[7px] pl-px">
          {[0, 1, 2, 3].map((i) => (
            <div key={i} className="flex flex-col items-center gap-[2px]">
              <div className="size-[4.500px] rounded-[1.500px] border border-white/60" />
              <div className="h-px w-[6px] bg-white/25" />
            </div>
          ))}
        </div>
        <div className="mt-[4px] ml-[3px] h-px w-[10px] bg-white/50" />
        <div className="mt-[6px] grid grid-cols-2 justify-items-center">
          <div className="size-[4.500px] rounded-[1.500px] border border-white/60" />
          <div className="size-[4.500px] rounded-[1.500px] border border-white/60" />
        </div>
        <Camera className="absolute top-[38.500px] left-[25px] size-[19px]" />
      </div>
      <svg viewBox="0 0 46 60" className="-mt-[4px] ml-[28px] h-[60px] w-[46px] shrink-0">
        <defs><linearGradient id="tr" x1="0" x2="1"><stop offset="0" stopColor="#d9d9d9" /><stop offset="0.500" stopColor="#c2c2c3" /><stop offset="1" stopColor="#dedede" /></linearGradient></defs>
        <path d="M2 8 H44 L38 55 Q37 59 32 59 H14 Q9 59 8 55 Z" fill="url(#tr)" />
        <ellipse cx="23" cy="8" rx="21.500" ry="5" fill="#a9a6a8" />
        <path d="M5 8 L13 2 L20 5 L26 1 L32 5 L38 3 L41 9 L33 13 H14 Z" fill="#dfe0df" />
        <path d="M12 6 L17 4 L21 9 L15 12 Z" fill="#557a66" />
        <path d="M26 9 L30 3 L34 9 Z" fill="#9a4d48" />
        <path d="M22 10 L25 5 L27 12 Z M35 8 L38 6 L39 10 Z" fill="#46464a" />
        <path d="M2 8 Q23 19 44 8" stroke="#eee" strokeWidth="1.500" fill="none" />
        <path d="M12 22 L20 34 L15 48 M34 18 L27 30 L32 46" stroke="#b4b4b5" fill="none" opacity="0.700" />
      </svg>
    </div>
  );
}

export default function App() {
  return (
    <div className={"h-[1080px] w-[1920px] overflow-hidden bg-black " + UI}>
      <div className="relative ml-[95px] flex h-full w-[1730px] flex-col overflow-hidden">
        <Wallpaper />
        <MenuBar />
        <div className="absolute top-[64px] left-[29.500px] h-[60px] w-[20px] rounded-[4px] bg-[#d8d2d2]">
          <div className="mt-[11px] ml-[3px] h-[37px] w-[17px] border border-[#8a8586] bg-[#b9b3b4]" />
        </div>
        <div className="absolute top-[139px] left-[9px] text-[15px] leading-[22px] text-white [text-shadow:0_1px_2px_rgba(0,0,0,0.5)]">大伟</div>
        <div className="absolute top-[310.500px] left-[6.500px] text-[14.300px] leading-[22px] font-bold text-white [text-shadow:0_1px_2px_rgba(0,0,0,0.6)]">Clas</div>
        <KeynoteWindow />
        <Dock />
      </div>
    </div>
  );
}
